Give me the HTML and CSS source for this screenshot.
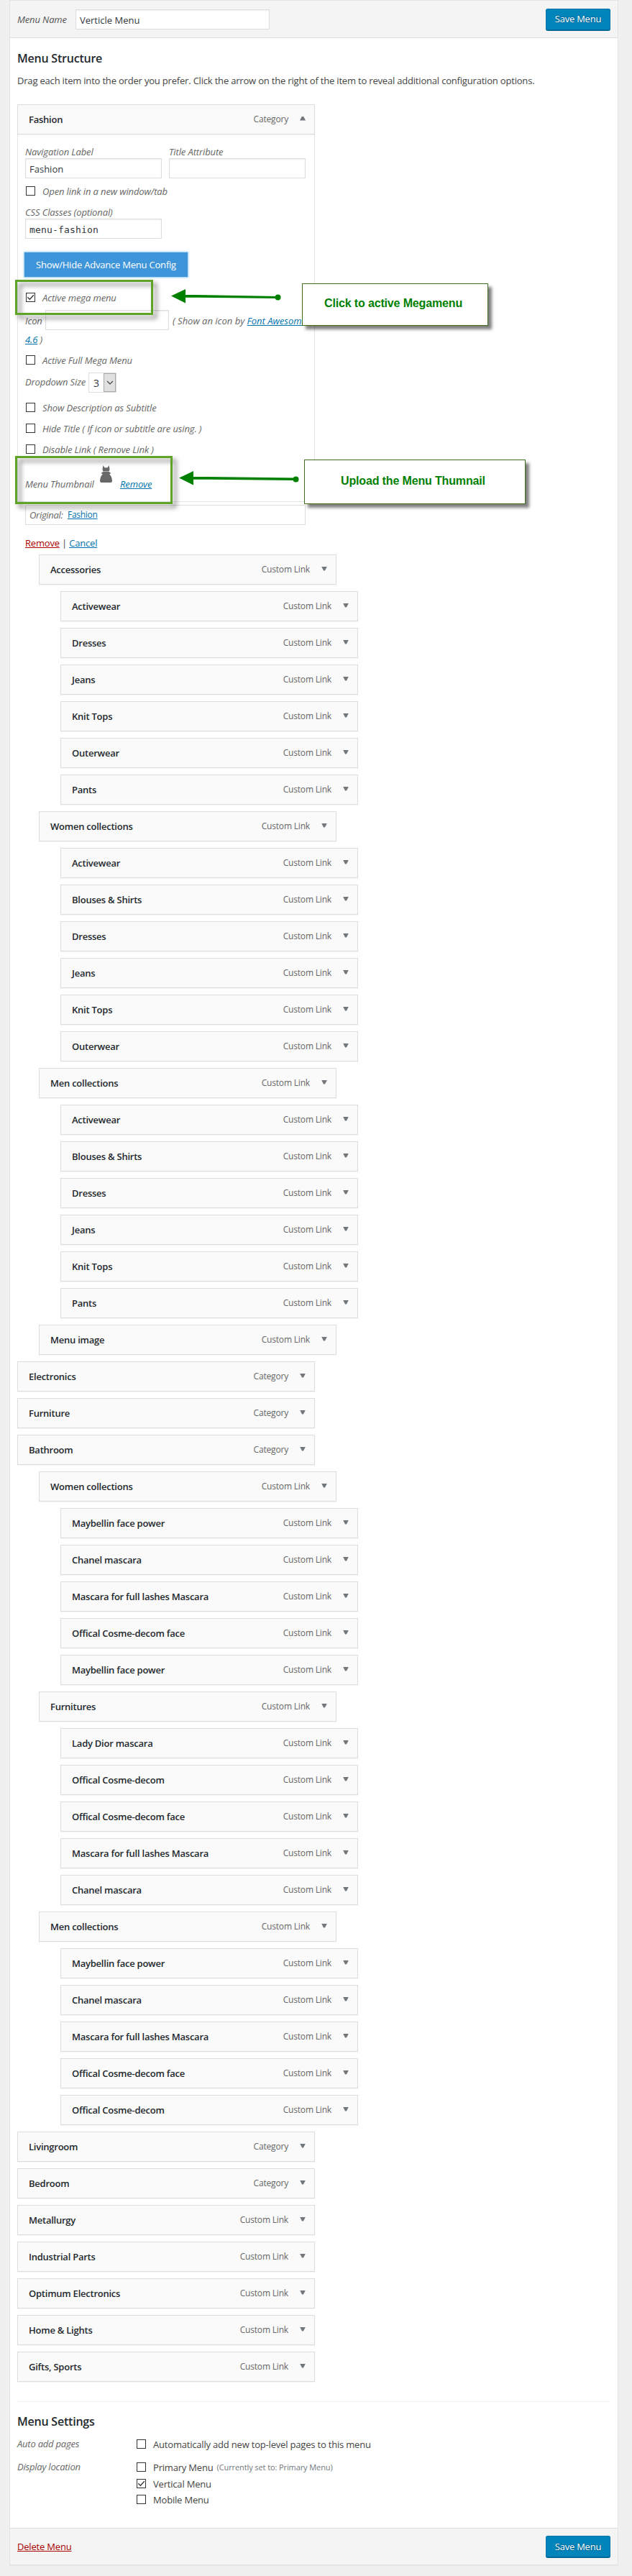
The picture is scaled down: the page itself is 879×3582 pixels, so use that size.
FILE: index.html
```
<!DOCTYPE html>
<html lang="en">
<head>
<meta charset="utf-8">
<title>Menus</title>
<link rel="stylesheet" href="styles.css">
</head>
<body>
<main class="panel">
  <header class="bar bar-top">
    <label class="menu-name"><em>Menu Name</em><span class="field">Verticle Menu</span></label>
    <button class="save">Save Menu</button>
  </header>

  <section class="content">
    <h2>Menu Structure</h2>
    <p class="intro">Drag each item into the order you prefer. Click the arrow on the right of the item to reveal additional configuration options.</p>

    <div class="item open"><b>Fashion</b><span>Category</span><i class="up"></i></div>
    <div class="settings">
      <div class="pair">
        <label><em>Navigation Label</em><span class="field">Fashion</span></label>
        <label><em>Title Attribute</em><span class="field"></span></label>
      </div>
      <label class="check r-open"><i class="box"></i><em>Open link in a new window/tab</em></label>
      <label class="css"><em>CSS Classes (optional)</em><span class="field mono">menu-fashion</span></label>
      <button class="advance">Show/Hide Advance Menu Config</button>
      <label class="check r-mega"><i class="box"><svg viewBox="0 0 11 11"><path d="M1.2 5.2 4.4 8.3 9.8 2.2"/></svg></i><em>Active mega menu</em></label>
      <div class="icon-row"><em>Icon</em><span class="field"></span><em class="hint">( Show an icon by <a>Font Awesome</a></em></div>
      <div class="icon-version"><em><a>4.6</a> )</em></div>
      <label class="check r-full"><i class="box"></i><em>Active Full Mega Menu</em></label>
      <div class="size-row"><em>Dropdown Size</em><span class="select"><span>3</span><i><svg viewBox="0 0 10 6"><path d="M1 1 5 5 9 1"/></svg></i></span></div>
      <label class="check r-desc"><i class="box"></i><em>Show Description as Subtitle</em></label>
      <label class="check r-hide"><i class="box"></i><em>Hide Title ( If icon or subtitle are using. )</em></label>
      <label class="check r-disable"><i class="box"></i><em>Disable Link ( Remove Link )</em></label>
      <div class="thumb-row">
        <em>Menu Thumbnail</em>
        <svg class="dress" viewBox="0 0 17 24"><path d="M4.6 0 6.4 3.2H10.600L12.400 0 13.6 5.500 12.600 8.600H4.4L3.400 5.500ZM4.400 9H12.600L15.4 11 13.200 12.400C15.800 14.400 16.900 18 17 22.600L15.500 24H1.500L0 22.600C.1 18 1.200 14.400 3.800 12.400L1.600 11Z"/></svg>
        <em><a>Remove</a></em>
      </div>
    </div>
    <div class="original"><em>Original:</em><a>Fashion</a></div>
    <div class="actions"><a class="danger">Remove</a> | <a>Cancel</a></div>

    <div class="items">
      <div class="item l1"><b>Accessories</b><span>Custom Link</span><i></i></div>
      <div class="item l2"><b>Activewear</b><span>Custom Link</span><i></i></div>
      <div class="item l2"><b>Dresses</b><span>Custom Link</span><i></i></div>
      <div class="item l2"><b>Jeans</b><span>Custom Link</span><i></i></div>
      <div class="item l2"><b>Knit Tops</b><span>Custom Link</span><i></i></div>
      <div class="item l2"><b>Outerwear</b><span>Custom Link</span><i></i></div>
      <div class="item l2"><b>Pants</b><span>Custom Link</span><i></i></div>
      <div class="item l1"><b>Women collections</b><span>Custom Link</span><i></i></div>
      <div class="item l2"><b>Activewear</b><span>Custom Link</span><i></i></div>
      <div class="item l2"><b>Blouses &amp; Shirts</b><span>Custom Link</span><i></i></div>
      <div class="item l2"><b>Dresses</b><span>Custom Link</span><i></i></div>
      <div class="item l2"><b>Jeans</b><span>Custom Link</span><i></i></div>
      <div class="item l2"><b>Knit Tops</b><span>Custom Link</span><i></i></div>
      <div class="item l2"><b>Outerwear</b><span>Custom Link</span><i></i></div>
      <div class="item l1"><b>Men collections</b><span>Custom Link</span><i></i></div>
      <div class="item l2"><b>Activewear</b><span>Custom Link</span><i></i></div>
      <div class="item l2"><b>Blouses &amp; Shirts</b><span>Custom Link</span><i></i></div>
      <div class="item l2"><b>Dresses</b><span>Custom Link</span><i></i></div>
      <div class="item l2"><b>Jeans</b><span>Custom Link</span><i></i></div>
      <div class="item l2"><b>Knit Tops</b><span>Custom Link</span><i></i></div>
      <div class="item l2"><b>Pants</b><span>Custom Link</span><i></i></div>
      <div class="item l1"><b>Menu image</b><span>Custom Link</span><i></i></div>
      <div class="item"><b>Electronics</b><span>Category</span><i></i></div>
      <div class="item"><b>Furniture</b><span>Category</span><i></i></div>
      <div class="item"><b>Bathroom</b><span>Category</span><i></i></div>
      <div class="item l1"><b>Women collections</b><span>Custom Link</span><i></i></div>
      <div class="item l2"><b>Maybellin face power</b><span>Custom Link</span><i></i></div>
      <div class="item l2"><b>Chanel mascara</b><span>Custom Link</span><i></i></div>
      <div class="item l2"><b>Mascara for full lashes Mascara</b><span>Custom Link</span><i></i></div>
      <div class="item l2"><b>Offical Cosme-decom face</b><span>Custom Link</span><i></i></div>
      <div class="item l2"><b>Maybellin face power</b><span>Custom Link</span><i></i></div>
      <div class="item l1"><b>Furnitures</b><span>Custom Link</span><i></i></div>
      <div class="item l2"><b>Lady Dior mascara</b><span>Custom Link</span><i></i></div>
      <div class="item l2"><b>Offical Cosme-decom</b><span>Custom Link</span><i></i></div>
      <div class="item l2"><b>Offical Cosme-decom face</b><span>Custom Link</span><i></i></div>
      <div class="item l2"><b>Mascara for full lashes Mascara</b><span>Custom Link</span><i></i></div>
      <div class="item l2"><b>Chanel mascara</b><span>Custom Link</span><i></i></div>
      <div class="item l1"><b>Men collections</b><span>Custom Link</span><i></i></div>
      <div class="item l2"><b>Maybellin face power</b><span>Custom Link</span><i></i></div>
      <div class="item l2"><b>Chanel mascara</b><span>Custom Link</span><i></i></div>
      <div class="item l2"><b>Mascara for full lashes Mascara</b><span>Custom Link</span><i></i></div>
      <div class="item l2"><b>Offical Cosme-decom face</b><span>Custom Link</span><i></i></div>
      <div class="item l2"><b>Offical Cosme-decom</b><span>Custom Link</span><i></i></div>
      <div class="item"><b>Livingroom</b><span>Category</span><i></i></div>
      <div class="item"><b>Bedroom</b><span>Category</span><i></i></div>
      <div class="item"><b>Metallurgy</b><span>Custom Link</span><i></i></div>
      <div class="item"><b>Industrial Parts</b><span>Custom Link</span><i></i></div>
      <div class="item"><b>Optimum Electronics</b><span>Custom Link</span><i></i></div>
      <div class="item"><b>Home &amp; Lights</b><span>Custom Link</span><i></i></div>
      <div class="item"><b>Gifts, Sports</b><span>Custom Link</span><i></i></div>
    </div>

    <div class="menu-settings">
      <h2>Menu Settings</h2>
      <div class="group">
        <em>Auto add pages</em>
        <div><label class="option"><i class="box"></i>Automatically add new top-level pages to this menu</label></div>
      </div>
      <div class="group">
        <em>Display location</em>
        <div>
          <label class="option"><i class="box"></i>Primary Menu <small>(Currently set to: Primary Menu)</small></label>
          <label class="option vertical"><i class="box"><svg viewBox="0 0 11 11"><path d="M1.2 5.2 4.4 8.3 9.8 2.2"/></svg></i>Vertical Menu</label>
          <label class="option"><i class="box"></i>Mobile Menu</label>
        </div>
      </div>
    </div>
  </section>

  <footer class="bar bar-bottom">
    <a class="danger">Delete Menu</a>
    <button class="save">Save Menu</button>
  </footer>
</main>

<!-- Notes laid over the form -->
<div class="frame frame-mega"></div>
<div class="frame frame-thumb"></div>
<svg class="arrow arrow-mega" viewBox="0 0 153 20"><path d="M0 9.5 20 0V19.5ZM19 7.8 149 10V13L19 11.6Z"/><circle cx="148.500" cy="11.500" r="4"/></svg>
<svg class="arrow arrow-thumb" viewBox="0 0 167 20"><path d="M0 9.5 20 0V19.5ZM19 7.8 163 9.500V13L19 11.6Z"/><circle cx="162.500" cy="11.500" r="4"/></svg>
<div class="callout callout-mega">Click to active Megamenu</div>
<div class="callout callout-thumb">Upload the Menu Thumnail</div>
</body>
</html>
```
FILE: styles.css
```
* { box-sizing: border-box; }
body {
  position: relative;
  margin: 0;
  height: 3582px;
  background: #f0f0f0;
  color: #444;
  font: 13px/20px "Open Sans", "Noto Sans", sans-serif;
  letter-spacing: -0.19px;
}
.panel {
  width: 847px;
  height: 3567px;
  margin-left: 13px;
  display: flex;
  flex-direction: column;
  background: #fff;
  border: 1px solid #e4e4e4;
  box-shadow: 0 1px 1px rgba(0, 0, 0, .04);
}
em { color: #666; letter-spacing: -0.12px; white-space: nowrap; }
a { color: #0073aa; text-decoration: underline; }
a.danger { color: #a00; }
h2 { margin: 0; color: #23282d; font-size: 16px; font-weight: 600; line-height: 22px; letter-spacing: -0.22px; }

.bar { display: flex; justify-content: space-between; align-items: center; padding: 0 10px; background: #f4f4f4; flex: none; }
.bar-top { height: 52px; border-bottom: 1px solid #ddd; }
.bar-bottom { height: 51px; border-top: 1px solid #ddd; margin-top: auto; }
.menu-name { display: flex; align-items: center; }
.menu-name em { width: 81px; color: #555; }
.menu-name .field { width: 270px; }
.save {
  width: 90px;
  height: 30px;
  padding: 0 0 1px;
  border: 1px solid #0073aa;
  border-bottom-color: #006799;
  border-radius: 3px;
  background: #0085ba;
  box-shadow: 0 1px 0 #006799;
  color: #fff;
  font: inherit;
  letter-spacing: -0.24px;
  text-shadow: 0 -1px 1px #006799, 1px 0 1px #006799, 0 1px 1px #006799;
}
.field {
  display: block;
  height: 28px;
  padding: 2px 5px 0;
  border: 1px solid #ddd;
  background: #fff;
  box-shadow: inset 0 1px 2px rgba(0, 0, 0, .07);
  color: #32373c;
  line-height: 25px;
  letter-spacing: 0;
}
.mono { font-family: "DejaVu Sans Mono", monospace; letter-spacing: .17px; }

.content { padding: 17px 10px 0; }
.intro { margin: 10px 0 23px; white-space: nowrap; }

.item {
  position: relative;
  display: flex;
  align-items: center;
  width: 414px;
  height: 42px;
  padding: 0 12px 0 15px;
  border: 1px solid #ddd;
  background: #fafafa;
  box-shadow: 0 1px 1px rgba(0, 0, 0, .04);
}
.item b { flex: 1; color: #23282d; font-weight: 600; letter-spacing: -0.24px; }
.item span { color: #666; font-size: 12px; letter-spacing: -0.18px; padding-right: 16px; }
.item i { width: 8px; height: 6px; margin-top: -3px; background: #72777c; clip-path: polygon(0 0, 100% 0, 62% 100%, 38% 100%); }
.item .up { clip-path: polygon(0 100%, 100% 100%, 62% 0, 38% 0); }
.items { display: flex; flex-direction: column; gap: 9px; margin-top: 6px; }
.l1 { margin-left: 30px; }
.l2 { margin-left: 60px; }

.settings {
  width: 414px;
  height: 511px;
  padding: 15px 10px 0;
  border: 1px solid #e5e5e5;
  border-top: 0;
}
.pair { display: flex; gap: 10px; }
.pair label, .css { width: 190px; }
.pair em, .css em { display: block; height: 18px; line-height: 18px; }
.check { display: flex; align-items: center; height: 20px; padding-left: 1px; }
.box {
  flex: none;
  width: 13px;
  height: 13px;
  margin: -1px 10px 0 0;
  border: 1px solid #333;
  background: #fff;
  display: block;
}
.box svg { display: block; width: 11px; height: 11px; }
.box path { fill: none; stroke: #333; stroke-width: 1.3; }
.r-open { margin-top: 8px; }
.css { display: block; margin-top: 10px; }
.advance {
  display: block;
  width: 227px;
  height: 34px;
  margin: 19px 0 0 -1px;
  padding: 0;
  border: 0;
  background: #3f95d9;
  box-shadow: 0 0 2px 1px rgba(90, 180, 225, .7);
  color: #fff;
  font: inherit;
  letter-spacing: -0.21px;
}
.r-mega { margin-top: 19px; }
.icon-row { display: flex; align-items: center; height: 28px; margin-top: 7px; white-space: nowrap; }
.icon-row em { width: 28px; padding-top: 2px; }
.icon-row .field { flex: none; width: 172px; }
.icon-row .hint { width: auto; margin-left: 5px; letter-spacing: 0; }
.icon-version { margin-top: 3px; height: 20px; }
.r-full { margin-top: 9px; }
.size-row { display: flex; align-items: center; height: 28px; margin-top: 7px; }
.size-row em { width: 88px; margin-top: -2px; }
.select { display: flex; width: 39px; height: 28px; border: 1px solid #ddd; color: #32373c; font-size: 14px; }
.select span { width: 20px; padding-left: 6px; line-height: 28px; }
.select i { width: 17px; height: 26px; border: 1px solid #aaa; background: #e1e1e1; display: grid; place-items: center; }
.select svg { width: 10px; height: 6px; }
.select path { fill: none; stroke: #444; stroke-width: 1.2; }
.r-desc { margin-top: 11px; }
.r-hide { margin-top: 9px; }
.r-disable { margin-top: 9px; }
.thumb-row { display: flex; align-items: flex-end; height: 48px; }
.dress { width: 17px; height: 24px; margin: 0 11px 12px 10px; fill: #686868; }
.thumb-row em:first-child { width: 94px; }

.original {
  display: flex;
  align-items: center;
  gap: 7px;
  width: 390px;
  height: 28px;
  margin: 4px 0 0 11px;
  padding: 0 5px 1px;
  border: 1px solid #ddd;
}
.original em { width: 46px; letter-spacing: -0.3px; }
.original a { font-size: 12px; letter-spacing: -0.3px; }
.actions { margin: 15px 0 0 11px; height: 20px; }

.menu-settings { width: 825px; margin-top: 27px; padding-top: 16px; border-top: 1px solid #eee; }
.group { display: flex; margin-top: 10px; }
.group em { width: 166px; letter-spacing: -0.22px; }
.option { display: flex; align-items: center; height: 22px; }
.option small { color: #72777c; font-size: 11px; letter-spacing: -0.1px; margin-left: 5px; }
.vertical { margin-top: 1px; }

.frame { position: absolute; left: 21px; border: 3px solid #5fa327; filter: drop-shadow(5px 5px 3px rgba(0, 0, 0, .5)); }
.frame-mega { top: 389px; width: 192px; height: 49px; }
.frame-thumb { top: 634px; width: 219px; height: 67px; }
.arrow { position: absolute; fill: #008000; height: 20px; }
.arrow-mega { left: 238px; top: 402px; width: 153px; }
.arrow-thumb { left: 249px; top: 655px; width: 167px; }
.callout {
  position: absolute;
  border: 1px solid #3f6f1c;
  background: #fff;
  box-shadow: 5px 5px 4px rgba(0, 0, 0, .5);
  color: #008000;
  font: bold 16px/18px "Liberation Sans", Arial, sans-serif;
  letter-spacing: -0.15px;
  white-space: nowrap;
}
.callout-mega { left: 420px; top: 394px; width: 259px; height: 59px; padding: 18px 0 0 30px; }
.callout-thumb { left: 423px; top: 639px; width: 308px; height: 62px; padding: 20px 0 0 50px; }
```
